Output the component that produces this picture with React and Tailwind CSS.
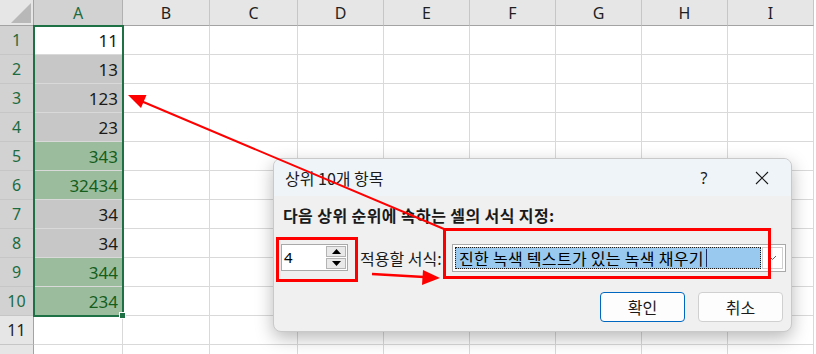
import React from "react";

const cols = ["A", "B", "C", "D", "E", "F", "G", "H", "I"];
const values = [11, 13, 123, 23, 343, 32434, 34, 34, 344, 234];
// w = white (active cell), g = gray selection, n = green rule fill
const fills = ["w", "g", "g", "g", "n", "n", "g", "g", "n", "n"];

const kr = "font-['Noto_Sans_CJK_KR','Noto_Sans',sans-serif]";

function Sheet() {
  const rows = Array.from({ length: 12 }, (_, i) => i + 1);
  return (
    <div className="grid grid-cols-[34px_89px_87px_88px_86px_86px_86px_86px_86px_86px] grid-rows-[26px_repeat(12,29px)] font-['Noto_Sans',sans-serif]">
      {/* Corner */}
      <div className="relative bg-[#e6e6e6] border-r border-b border-[#a3a3a3]">
        <svg className="absolute left-0 top-0" width="34" height="26">
          <polygon points="11,23 31,23 31,3" fill="#b8b8b8" />
        </svg>
      </div>
      {cols.map((c) => (
        <div
          key={c}
          className={`flex items-center justify-center text-[16px] border-b border-r ${
            c === "A"
              ? "bg-[#d2d2d2] text-[#1d6b41] border-b-[#1e7145] border-r-[#b1b1b1]"
              : "bg-[#e6e6e6] text-[#1f1f1f] border-b-[#a3a3a3] border-r-[#c6c6c6]"
          }`}
        >
          {c}
        </div>
      ))}
      {rows.map((r) => {
        const sel = r <= 10;
        const f = fills[r - 1];
        return (
          <React.Fragment key={r}>
            <div
              className={`flex items-center justify-center text-[16px] border-r border-b border-r-[#a3a3a3] border-b-[#c6c6c6] ${
                sel ? "bg-[#d2d2d2] text-[#1d6b41]" : "bg-[#e6e6e6] text-[#1f1f1f]"
              }`}
            >
              {r <= 11 ? r : ""}
            </div>
            {cols.map((c) => {
              let cls = "bg-white";
              if (c === "A" && sel) {
                if (f === "g") cls = "bg-[#c7c7c7] text-[#1a1a1a]";
                else if (f === "n") cls = "bg-[#9cbd9d] text-[#145d1c]";
                else cls = "bg-white text-[#1a1a1a]";
              }
              return (
                <div
                  key={c}
                  className={`flex items-center justify-end pr-[4px] pt-[2px] text-[17px] border-r border-b border-[#d9d9d9] ${cls}`}
                >
                  {c === "A" && sel ? values[r - 1] : ""}
                </div>
              );
            })}
          </React.Fragment>
        );
      })}
    </div>
  );
}

function Spinner() {
  return (
    <div className="flex w-[67px] h-[27px] border border-[#a9a9a9] bg-white">
      <div className="flex-1 flex items-center pl-[2px] text-[15px] text-black font-['Noto_Sans',sans-serif]">
        4
      </div>
      <div className="w-[22px] flex flex-col gap-[1px] p-[1px] bg-white">
        <div className="flex-1 flex items-center justify-center bg-[#e9e9e9] border border-[#b4b4b4]">
          <svg width="9" height="5">
            <polygon points="0,5 9,5 4.5,0" fill="#000" />
          </svg>
        </div>
        <div className="flex-1 flex items-center justify-center bg-[#e9e9e9] border border-[#b4b4b4]">
          <svg width="9" height="5">
            <polygon points="0,0 9,0 4.5,5" fill="#000" />
          </svg>
        </div>
      </div>
    </div>
  );
}

function Dropdown() {
  return (
    <div className="flex w-[334px] h-[28px] border border-[#a9a9a9] bg-white p-[2px] gap-[1px]">
      <div className="flex-1 flex items-center bg-[#99c9ef] border border-dotted border-[#1a1a1a] pl-[3px] text-[16px] tracking-[0.3px] text-black">
        진한 녹색 텍스트가 있는 녹색 채우기
        <span className="ml-[2px] w-[1px] h-[18px] bg-[#1a2a60]" />
      </div>
      <div className="w-[21px] flex items-center justify-center bg-white border border-[#cfcfcf]">
        <svg width="9" height="6" viewBox="0 0 9 6">
          <polyline points="1,1 4.5,4.5 8,1" fill="none" stroke="#606060" strokeWidth="1" />
        </svg>
      </div>
    </div>
  );
}

function Dialog() {
  return (
    <div
      className={`absolute left-[273px] top-[158px] w-[519px] h-[174px] rounded-[8px] overflow-hidden border border-[#c9c9c9] shadow-[0_6px_18px_rgba(0,0,0,0.28)] bg-[#f0f0f0] flex flex-col ${kr}`}
    >
      <div className="h-[37px] bg-[#eff4f9] flex items-center pl-[11px] text-[16px] text-[#1a1a1a]">
        <span>상위 10개 항목</span>
        <div className="ml-auto flex h-full">
          <div className="w-[58px] flex items-center justify-center text-[16px] font-['Noto_Sans',sans-serif]">
            ?
          </div>
          <div className="w-[58px] flex items-center justify-center">
            <svg width="14" height="14" viewBox="0 0 14 14">
              <path d="M1 1 L13 13 M13 1 L1 13" stroke="#1a1a1a" strokeWidth="1.1" />
            </svg>
          </div>
        </div>
      </div>
      <div className="flex-1 flex flex-col px-[7px] pt-[9px]">
        <div className="h-[20px] flex items-center pl-[2px] text-[16px] font-bold tracking-[0.4px] text-[#1a1a1a]">
          다음 상위 순위에 속하는 셀의 서식 지정:
        </div>
        <div className="mt-[19px] flex items-start -mr-[2px]">
          <Spinner />
          <div className="ml-[12px] h-[28px] flex items-center text-[16px] text-[#1a1a1a]">
            적용할 서식:
          </div>
          <div className="ml-auto">
            <Dropdown />
          </div>
        </div>
        <div className="mt-[20px] flex justify-end gap-[13px] pr-[1px]">
          <button className="w-[85px] h-[30px] rounded-[4px] bg-[#fdfdfd] border border-[#0067c0] text-[16px] text-[#1a1a1a]">
            확인
          </button>
          <button className="w-[85px] h-[30px] rounded-[4px] bg-[#fdfdfd] border border-[#d0d0d0] text-[16px] text-[#1a1a1a]">
            취소
          </button>
        </div>
      </div>
    </div>
  );
}

function Annotations() {
  return (
    <svg className="absolute left-0 top-0 pointer-events-none" width="816" height="354">
      <rect x="277.5" y="238.5" width="79" height="42" fill="none" stroke="#ff0000" strokeWidth="3" />
      <rect x="444.5" y="229.5" width="325" height="48" fill="none" stroke="#ff0000" strokeWidth="3" />
      <line x1="444" y1="229" x2="141" y2="101" stroke="#ff0000" strokeWidth="2" />
      <polygon points="128,95 146.5,95 141,108" fill="#ff0000" />
      <line x1="372" y1="274" x2="424" y2="277" stroke="#ff0000" strokeWidth="2.5" />
      <polygon points="440,278 423,270 422,285" fill="#ff0000" />
    </svg>
  );
}

export default function App() {
  return (
    <div className="relative w-[816px] h-[354px] overflow-hidden bg-white">
      <Sheet />
      {/* selection border + fill handle */}
      <div className="absolute left-[33px] top-[25px] w-[91px] h-[292px] border-2 border-[#1e7145]" />
      <div className="absolute left-[119px] top-[312px] w-[7px] h-[7px] bg-[#1e7145] border border-white" />
      <Dialog />
      <Annotations />
    </div>
  );
}
